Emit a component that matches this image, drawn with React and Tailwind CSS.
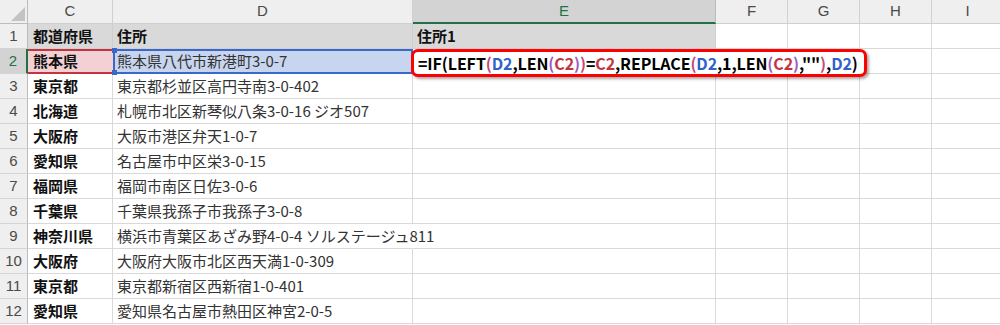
const cols = [
  { key: 'C', w: 'w-[85px]' },
  { key: 'D', w: 'w-[300px]' },
  { key: 'E', w: 'w-[303px]' },
  { key: 'F', w: 'w-[72px]' },
  { key: 'G', w: 'w-[72px]' },
  { key: 'H', w: 'w-[72px]' },
  { key: 'I', w: 'w-[72px]' },
];

const data = [
  ['熊本県', '熊本県八代市新港町3-0-7'],
  ['東京都', '東京都杉並区高円寺南3-0-402'],
  ['北海道', '札幌市北区新琴似八条3-0-16 ジオ507'],
  ['大阪府', '大阪市港区弁天1-0-7'],
  ['愛知県', '名古屋市中区栄3-0-15'],
  ['福岡県', '福岡市南区日佐3-0-6'],
  ['千葉県', '千葉県我孫子市我孫子3-0-8'],
  ['神奈川県', '横浜市青葉区あざみ野4-0-4 ソルステージュ811'],
  ['大阪府', '大阪府大阪市北区西天満1-0-309'],
  ['東京都', '東京都新宿区西新宿1-0-401'],
  ['愛知県', '愛知県名古屋市熱田区神宮2-0-5'],
];

// 数式の色分け
const formula = [
  ['=IF(LEFT', 'text-black'],
  ['(', 'text-[#c8457a]'],
  ['D2', 'text-[#2f62c9]'],
  [',LEN', 'text-black'],
  ['(', 'text-[#9a5bc2]'],
  ['C2', 'text-[#c4343f]'],
  [')', 'text-[#9a5bc2]'],
  [')', 'text-[#c8457a]'],
  ['=', 'text-black'],
  ['C2', 'text-[#c4343f]'],
  [',REPLACE', 'text-black'],
  ['(', 'text-[#c8457a]'],
  ['D2', 'text-[#2f62c9]'],
  [',1,LEN', 'text-black'],
  ['(', 'text-[#9a5bc2]'],
  ['C2', 'text-[#c4343f]'],
  [')', 'text-[#9a5bc2]'],
  [',""', 'text-black'],
  [')', 'text-[#c8457a]'],
  [',', 'text-black'],
  ['D2', 'text-[#2f62c9]'],
  [')', 'text-black'],
];

const jp = "font-['Noto_Sans_CJK_JP',sans-serif]";

function RowHead({ n, active }) {
  return (
    <div
      className={`w-[28px] shrink-0 h-full flex items-center justify-center border-b border-[#d4d4d4] text-[15px] font-['Liberation_Sans',sans-serif] ${
        active
          ? 'bg-[#d3d3d3] text-[#217346] border-r-2 border-r-[#217346]'
          : 'bg-[#efefef] text-[#4a4a4a] border-r border-r-[#bcbcbc]'
      }`}
    >
      {n}
    </div>
  );
}

function EmptyCells() {
  return (
    <>
      {cols.slice(3).map((c) => (
        <div key={c.key} className={`${c.w} shrink-0 h-full border-r border-b border-[#d9d9d9]`} />
      ))}
    </>
  );
}

export default function App() {
  return (
    <div className={`w-[1000px] h-[325px] overflow-hidden bg-white ${jp} text-[15px] text-[#111]`}>
      {/* 列見出し */}
      <div className="flex h-[24px]">
        <div className="w-[28px] shrink-0 h-full bg-[#efefef] border-r border-b border-[#bcbcbc] relative">
          <svg className="absolute right-[2px] bottom-[2px]" width="14" height="14" viewBox="0 0 14 14">
            <polygon points="14,0 14,14 0,14" fill="#c3c3c3" />
          </svg>
        </div>
        {cols.map((c) => (
          <div
            key={c.key}
            className={`${c.w} shrink-0 h-full flex items-center justify-center font-['Liberation_Sans',sans-serif] text-[15px] ${
              c.key === 'E'
                ? 'bg-[#d3d3d3] text-[#217346] border-r border-r-[#bcbcbc] border-b-2 border-b-[#217346]'
                : 'bg-[#efefef] text-[#4a4a4a] border-r border-b border-[#d0d0d0]'
            }`}
          >
            {c.key}
          </div>
        ))}
      </div>

      {/* 1行目 見出し */}
      <div className="flex h-[25px]">
        <RowHead n={1} />
        <div className="w-[85px] shrink-0 h-full bg-[#d9d9d9] border-r border-b border-[#cfcfcf] pl-[5px] flex items-center font-bold">都道府県</div>
        <div className="w-[300px] shrink-0 h-full bg-[#d9d9d9] border-r border-b border-[#cfcfcf] pl-[4px] flex items-center font-bold">住所</div>
        <div className="w-[303px] shrink-0 h-full bg-[#d9d9d9] border-r border-b border-[#cfcfcf] pl-[4px] flex items-center font-bold">住所1</div>
        <EmptyCells />
      </div>

      {/* 2行目 数式編集中 */}
      <div className="flex h-[25px]">
        <RowHead n={2} active />
        <div className="w-[85px] shrink-0 h-full bg-[#f3d0d4] border-y-2 border-[#c4343f] pl-[5px] flex items-center font-bold">熊本県</div>
        <div className="w-[300px] shrink-0 h-full bg-[#c8d5ef] border-2 border-[#3a68c9] pl-[2px] flex items-center text-[#333] relative">
          熊本県八代市新港町3-0-7
          <span className="absolute -left-[3px] -top-[3px] w-[5px] h-[5px] bg-[#3a68c9]" />
          <span className="absolute -left-[3px] -bottom-[3px] w-[5px] h-[5px] bg-[#3a68c9]" />
        </div>
        <div className="w-[303px] shrink-0 h-full border-r border-b border-[#d9d9d9] relative">
          <div className="absolute -left-[2px] top-0 h-[28px] z-10 bg-white border-[3px] border-[#ff0000] rounded-[7px] shadow-[2px_2px_3px_rgba(0,0,0,0.35)] pl-[4px] pr-[6px] flex items-center whitespace-nowrap font-semibold text-[16px] tracking-[-0.1px]">
            {formula.map(([t, c], i) => (
              <span key={i} className={c}>{t}</span>
            ))}
          </div>
        </div>
        <EmptyCells />
      </div>

      {data.slice(1).map((r, i) => {
        const n = i + 3;
        const overflow = n === 9;
        return (
          <div key={n} className="flex h-[25px]">
            <RowHead n={n} />
            <div className="w-[85px] shrink-0 h-full border-r border-b border-[#d9d9d9] pl-[5px] flex items-center font-bold whitespace-nowrap">{r[0]}</div>
            <div
              className={`w-[300px] shrink-0 h-full border-b border-[#d9d9d9] pl-[4px] flex items-center whitespace-nowrap text-[#333] ${
                overflow ? 'border-r border-r-transparent overflow-visible' : 'border-r'
              }`}
            >
              {r[1]}
            </div>
            <div className="w-[303px] shrink-0 h-full border-r border-b border-[#d9d9d9]" />
            <EmptyCells />
          </div>
        );
      })}
    </div>
  );
}
